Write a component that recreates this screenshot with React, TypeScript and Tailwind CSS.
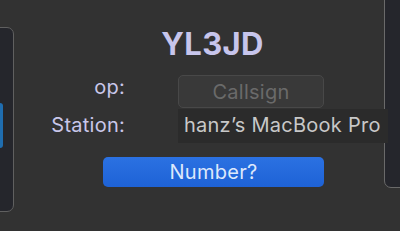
export default function App() {
    return (
        <div className="flex h-[231px] w-[400px] overflow-hidden bg-[#323232] font-['Inter','Liberation_Sans',sans-serif]">
            {/* left neighbour card, mostly off screen */}
            <div className="-ml-[26px] mt-[27px] flex h-[185px] w-[40px] shrink-0 items-start rounded-[7px] border border-[#606060] bg-[#25262c] pt-[75px]">
                <div className="ml-[24px] h-[45px] w-[4px] rounded-r-[3px] bg-[#1f6db0]" />
            </div>

            <div className="flex min-w-0 flex-1 flex-col">
                <h1 className="pl-[27px] pt-[26px] text-center text-[31px] font-bold leading-[36px] tracking-[0.4px] text-[#c7c5ec]">
                    YL3JD
                </h1>

                <div className="mt-[13px] flex">
                    <span className="w-[111px] shrink-0 text-right text-[20px] leading-[24px] tracking-[0.25px] text-[#c9c7ea]">
                        op:
                    </span>
                    <div className="ml-[53px] flex h-[33px] w-[146px] shrink-0 items-center justify-center rounded-[5px] border border-[#484848] bg-[#393939] text-[20px] tracking-[0.25px] text-[#6a6a6a]">
                        Callsign
                    </div>
                </div>

                <div className="mt-px flex">
                    <span className="w-[111px] shrink-0 pt-[4px] text-right text-[20px] leading-[24px] tracking-[0.25px] text-[#c9c7ea]">
                        Station:
                    </span>
                    <div className="relative z-10 ml-[53px] h-[34px] w-[210px] shrink-0 bg-[#2b2b2b] pl-[6px] pt-[4px] text-[20px] leading-[24px] tracking-[0.25px] whitespace-nowrap text-[#c8c8c8]">
                        hanz’s MacBook Pro
                    </div>
                </div>

                <button className="ml-[89px] mt-[14px] h-[30px] w-[221px] rounded-[5px] bg-gradient-to-b from-[#2b71e2] to-[#1e62d6] text-[20px] leading-[30px] tracking-[0.3px] text-[#dde8fb]">
                    Number?
                </button>
            </div>

            {/* right neighbour card */}
            <div className="-mr-[14px] -mt-[10px] h-[198px] w-[30px] shrink-0 rounded-[7px] border border-[#6a6a6a] bg-[#25262c]" />
        </div>
    );
}
